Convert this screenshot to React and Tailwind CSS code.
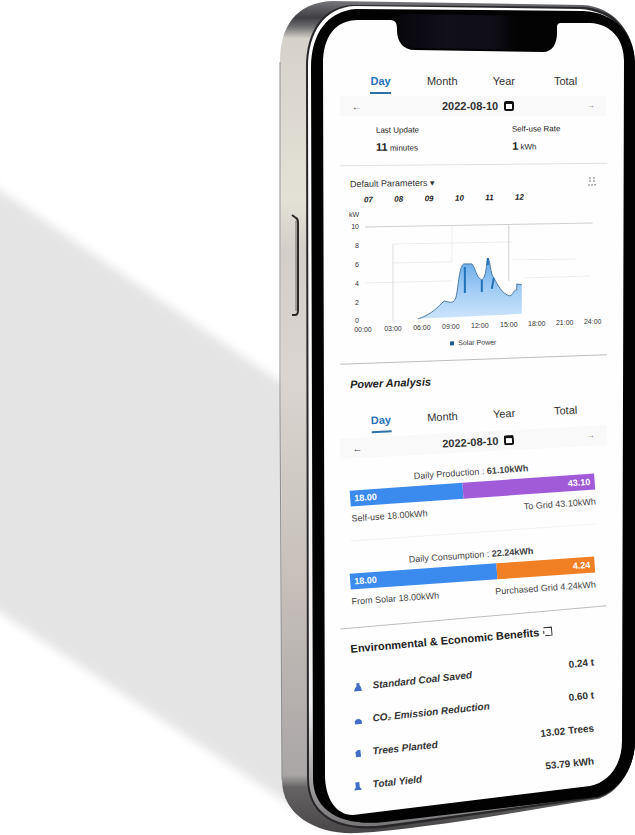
import React from 'react';

const PERIODS = ['Day', 'Month', 'Year', 'Total'];

const BENEFITS = [
    { name: 'Standard Coal Saved', value: '0.24 t', icon: 'M4 1h3v2l1 2 1 4H1l1-3 2-2z' },
    { name: 'CO₂ Emission Reduction', value: '0.60 t', icon: 'M2 9V6l2-2h3l2 2v3z' },
    { name: 'Trees Planted', value: '13.02 Trees', icon: 'M3 9V4l2-2h3v7z' },
    { name: 'Total Yield', value: '53.79 kWh', icon: 'M3 1h4v5l2 3H1l2-3z' },
];

const HOURS = [
    { label: '00:00', x: 363, y: 331 },
    { label: '03:00', x: 393, y: 330 },
    { label: '06:00', x: 422, y: 329 },
    { label: '09:00', x: 451, y: 328 },
    { label: '12:00', x: 480, y: 327 },
    { label: '15:00', x: 509, y: 326 },
    { label: '18:00', x: 537, y: 325 },
    { label: '21:00', x: 565, y: 324 },
    { label: '24:00', x: 593, y: 323 },
];

const SCALE = [
    { label: 'kW', y: 216 },
    { label: '10', y: 228 },
    { label: '8', y: 247 },
    { label: '6', y: 266 },
    { label: '4', y: 285 },
    { label: '2', y: 304 },
    { label: '0', y: 322 },
];

// Phone body, bezel, notch and the long shadow behind it
const PhoneBody = () => (
    <svg className="col-start-1 row-start-1 w-full" viewBox="0 0 635 835" aria-hidden="true">
        <defs>
            <linearGradient id="side" x1="0" y1="0" x2="0" y2="1">
                <stop offset="0" stopColor="#77767a" />
                <stop offset="0.02" stopColor="#3f3e43" />
                <stop offset="0.03" stopColor="#6a696c" />
                <stop offset="0.045" stopColor="#d6d2cb" />
                <stop offset="0.24" stopColor="#e4e1d6" />
                <stop offset="0.3" stopColor="#d3cec9" />
                <stop offset="0.45" stopColor="#dad5d0" />
                <stop offset="0.7" stopColor="#c6bfba" />
                <stop offset="0.93" stopColor="#aaa6a6" />
                <stop offset="0.945" stopColor="#656364" />
                <stop offset="1" stopColor="#484647" />
            </linearGradient>
            <linearGradient id="rim" x1="0" y1="0" x2="0" y2="1">
                <stop offset="0" stopColor="#ffffff" />
                <stop offset="0.85" stopColor="#f0eeee" />
                <stop offset="1" stopColor="#777577" />
            </linearGradient>
            <linearGradient id="notch" x1="0" y1="0" x2="1" y2="0">
                <stop offset="0" stopColor="#08070d" />
                <stop offset="0.3" stopColor="#11101a" />
                <stop offset="0.6" stopColor="#0f0e18" />
                <stop offset="0.75" stopColor="#030303" />
            </linearGradient>
            <filter id="soft" x="-10%" y="-10%" width="120%" height="120%">
                <feGaussianBlur stdDeviation="5" />
            </filter>
        </defs>
        <path d="M-40 163 L330 416 V831 L-40 586z" fill="#e4e4e4" filter="url(#soft)" />
        <path
            d="M280 62 C280 26 296 3 332 1 L583 5 C613 7 633 30 635 62 V744 C633 774 615 794 598 799 C500 815 420 829 357 833 C318 835 282 816 282 780z"
            fill="url(#side)"
        />
        <path d="M280 62 V400 L282 780" fill="none" stroke="#8d8e8f" />
        <path
            d="M306 68 C306 30 323 7 352 5 L583 7 C614 9 634 32 635 62 V744 C633 775 613 795 597 798 L390 827 C340 834 307 818 307 778z"
            fill="#28272a"
        />
        <path
            d="M308 68 C308 31 325 8 354 6 L580 9 C612 11 633 33 634 62 V744 C632 774 612 794 590 797 L385 825 C337 831 309 814 309 778z"
            fill="url(#rim)"
        />
        <path
            d="M311 68 C311 33 328 11 356 9 L583 11 C615 12 635 35 635 64 V744 C633 774 614 794 596 797 L385 822 C340 827 313 810 313 778z"
            fill="#020202"
        />
        <path
            d="M323 64 C323 36 336 20 358 20 L391 20 C396 21 397 23 397 30 C397 42 403 50 415 50 L543 52 C552 52 557 44 557 33 V28 C557 24 558 23 562 23 L590 23 C611 24 624 39 624 61 L622 741 C622 765 609 782 590 786 L353 815 C335 815 325 797 325 775z"
            fill="#fefefe"
        />
        <path d="M400 14 L556 16 L555 34 C554 44 551 50 543 50 L415 48 C404 48 399 42 399 30z" fill="url(#notch)" />
        <path d="M292 215 L296 218 Q298 219 298 223 V310 Q298 315 295 315 H292" fill="none" stroke="#2c2927" strokeWidth="2" />
        <path d="M296 221 V311" stroke="#6b6662" />
    </svg>
);

const PeriodTabs = ({ className }) => (
    <div className={`grid grid-cols-4 h-6 px-2.5 text-[11px] leading-5 ${className}`}>
        {PERIODS.map((period) => (
            <div key={period} className="flex justify-center">
                <button
                    type="button"
                    className={period === 'Day' ? 'border-b-2 border-[#2f6fa8] font-bold text-[#2672b8]' : 'border-b-2 border-transparent text-[#333]'}
                >
                    {period}
                </button>
            </div>
        ))}
    </div>
);

const DateBar = ({ className, date }) => (
    <div className={`flex items-center justify-between h-5 px-3 bg-[#f9f9f9] text-[11px] ${className}`}>
        <button type="button" aria-label="Previous day" className="text-[10px] text-[#444]">←</button>
        <div className="flex items-center gap-1.5 pl-2 font-bold text-[#333]">
            {date}
            <svg className="w-2.5 h-2.5" viewBox="0 0 10 10" aria-hidden="true">
                <rect x="1" y="1" width="8" height="8" rx="1" fill="#fff" stroke="#111" strokeWidth="2" />
                <path d="M1 1h8v2H1z" fill="#111" />
            </svg>
        </div>
        <button type="button" aria-label="Next day" className="text-[8px] text-[#777]">→</button>
    </div>
);

const YieldChart = () => (
    <svg className="w-full" viewBox="340 208 267 126" role="img" aria-label="Solar power over the day">
        <defs>
            <linearGradient id="area" x1="0" y1="0" x2="0" y2="1">
                <stop offset="0" stopColor="#64a9e8" />
                <stop offset="0.5" stopColor="#9fcbf5" />
                <stop offset="1" stopColor="#cde5fb" />
            </linearGradient>
        </defs>
        <g fill="none" stroke="#ededed">
            <path d="M365 226 L593 222" stroke="#cfcfcf" />
            <path d="M393 243 L512 241" />
            <path d="M393 262 L452 261" />
            <path d="M512 259 L576 258" />
            <path d="M365 282 L452 280" />
            <path d="M525 277 L590 275" />
            <path d="M393 243 V322" stroke="#dedede" />
            <path d="M452 225 V262" />
            <path d="M509 223 V280" stroke="#cfcfcf" />
        </g>
        <path
            d="M418 318 C428 315 436 309 442 302 Q444 299 448 301 Q454 303 456 297 C459 284 459 266 464 263 L472 263 C476 267 476 277 482 279 C487 276 486 263 488 257 C491 261 490 272 494 277 C498 284 502 293 510 295 C515 293 512 290 517 289 V283 L522 284 V313 L418 318z"
            fill="url(#area)"
        />
        <path
            d="M418 318 C428 315 436 309 442 302 Q444 299 448 301 Q454 303 456 297 C459 284 459 266 464 263 L472 263 C476 267 476 277 482 279 C487 276 486 263 488 257 C491 261 490 272 494 277 C498 284 502 293 510 295 C515 293 512 290 517 289 V283 L522 284"
            fill="none"
            stroke="#4779a3"
        />
        <path d="M465 266 V292 M482 279 V291 M488 257 V264 M494 277 L492 288" fill="none" stroke="#2270b5" strokeWidth="2" />
        <g fill="#333" fontSize="7">
            {SCALE.map((mark) => (
                <text key={mark.label} x="359" y={mark.y} textAnchor="end">{mark.label}</text>
            ))}
            {HOURS.map((hour) => (
                <text key={hour.label} x={hour.x} y={hour.y} textAnchor="middle">{hour.label}</text>
            ))}
        </g>
    </svg>
);

const SplitBar = ({ title, total, left, right, share, color, leftLabel, rightLabel }) => (
    <div className="-rotate-4 pl-2.5 pr-3 text-[9px] leading-4 text-[#444]">
        <div className="text-center">{title} : <span className="font-bold">{total}</span></div>
        <div className="mt-0.5 flex h-4 font-bold text-white">
            <div className="bg-[#3b8bee] px-1" style={{ width: `${share}%` }}>{left}</div>
            <div className={`grow px-1 text-right ${color}`}>{right}</div>
        </div>
        <div className="mt-1 flex justify-between">
            <span>{leftLabel}</span>
            <span>{rightLabel}</span>
        </div>
    </div>
);

const App = () => {
    return (
        <main className="grid items-start bg-white font-['Liberation_Sans',sans-serif] text-[#222]">
            <PhoneBody />

            <div className="col-start-1 row-start-1 ml-[53.5%] w-[42%] pt-[70px]">
                <PeriodTabs className="" />
                <DateBar className="mt-0.5" date="2022-08-10" />

                <div className="flex pl-9 pt-1.5 pb-2 text-[8px] leading-4 border-b border-[#e2e2e2] -rotate-[0.5deg]">
                    <div className="w-[59%]">
                        <div>Last Update</div>
                        <div><b className="text-[11px]">11</b> minutes</div>
                    </div>
                    <div>
                        <div>Self-use Rate</div>
                        <div><b className="text-[11px]">1</b> kWh</div>
                    </div>
                </div>

                {/* Parameters */}
                <div className="flex items-center justify-between h-5 mt-2 px-2.5 text-[9px] -rotate-1">
                    <button type="button" className="text-[#333]">Default Parameters ▾</button>
                    <button type="button" aria-label="Download" className="text-[#777]">
                        <svg className="w-2.5 h-2.5" viewBox="0 0 10 10" fill="none" stroke="currentColor" aria-hidden="true">
                            <path d="M1 9h8M3 1v5M7 1v5" strokeDasharray="2 1" />
                        </svg>
                    </button>
                </div>
                <div className="flex w-3/5 justify-between h-4 ml-6 text-[8px] font-bold italic -rotate-1">
                    <span>07</span>
                    <span>08</span>
                    <span>09</span>
                    <span>10</span>
                    <span>11</span>
                    <span>12</span>
                </div>
                <YieldChart />
                <div className="flex items-center justify-center gap-1 h-4 text-[7px] text-[#333] -rotate-1">
                    <span className="w-1 h-1 bg-[#1f5c94]"></span>
                    Solar Power
                </div>
                <div className="mt-2 border-t border-[#bdbdbd] -rotate-2"></div>

                {/* Power analysis */}
                <h2 className="mt-3 pl-2.5 text-[11px] leading-4 font-bold italic -rotate-2">Power Analysis</h2>
                <PeriodTabs className="mt-4 -rotate-3" />
                <DateBar className="mt-1 mb-3 -rotate-3" date="2022-08-10" />
                <SplitBar
                    title="Daily Production"
                    total="61.10kWh"
                    left="18.00"
                    right="43.10"
                    share={46}
                    color="bg-[#a25bd8]"
                    leftLabel="Self-use 18.00kWh"
                    rightLabel="To Grid 43.10kWh"
                />
                <div className="mx-2.5 my-3.5 border-t border-[#f2f2f2] -rotate-4"></div>
                <SplitBar
                    title="Daily Consumption"
                    total="22.24kWh"
                    left="18.00"
                    right="4.24"
                    share={60}
                    color="bg-[#f08023]"
                    leftLabel="From Solar 18.00kWh"
                    rightLabel="Purchased Grid 4.24kWh"
                />
                <div className="mt-4 border-t border-[#bdbdbd] -rotate-5"></div>

                {/* Benefits */}
                <h2 className="flex items-center gap-1 mt-3 pl-2.5 text-[11px] leading-4 font-bold whitespace-nowrap -rotate-5">
                    Environmental &amp; Economic Benefits
                    <svg className="w-2.5 h-2.5" viewBox="0 0 10 10" fill="none" stroke="#333" aria-hidden="true">
                        <path d="M1 1h8v8H2M1 4v3" />
                    </svg>
                </h2>
                <ul className="mt-3 text-[10px] font-bold text-[#333]">
                    {BENEFITS.map((item) => (
                        <li key={item.name} className="flex items-center h-[33px] px-3 -rotate-6">
                            <svg className="w-2.5 h-2.5 mr-2.5 fill-[#426fc5]" viewBox="0 0 10 10" aria-hidden="true">
                                <path d={item.icon} />
                            </svg>
                            <span className="grow italic">{item.name}</span>
                            <span>{item.value}</span>
                        </li>
                    ))}
                </ul>
            </div>
        </main>
    );
};

export default App;
